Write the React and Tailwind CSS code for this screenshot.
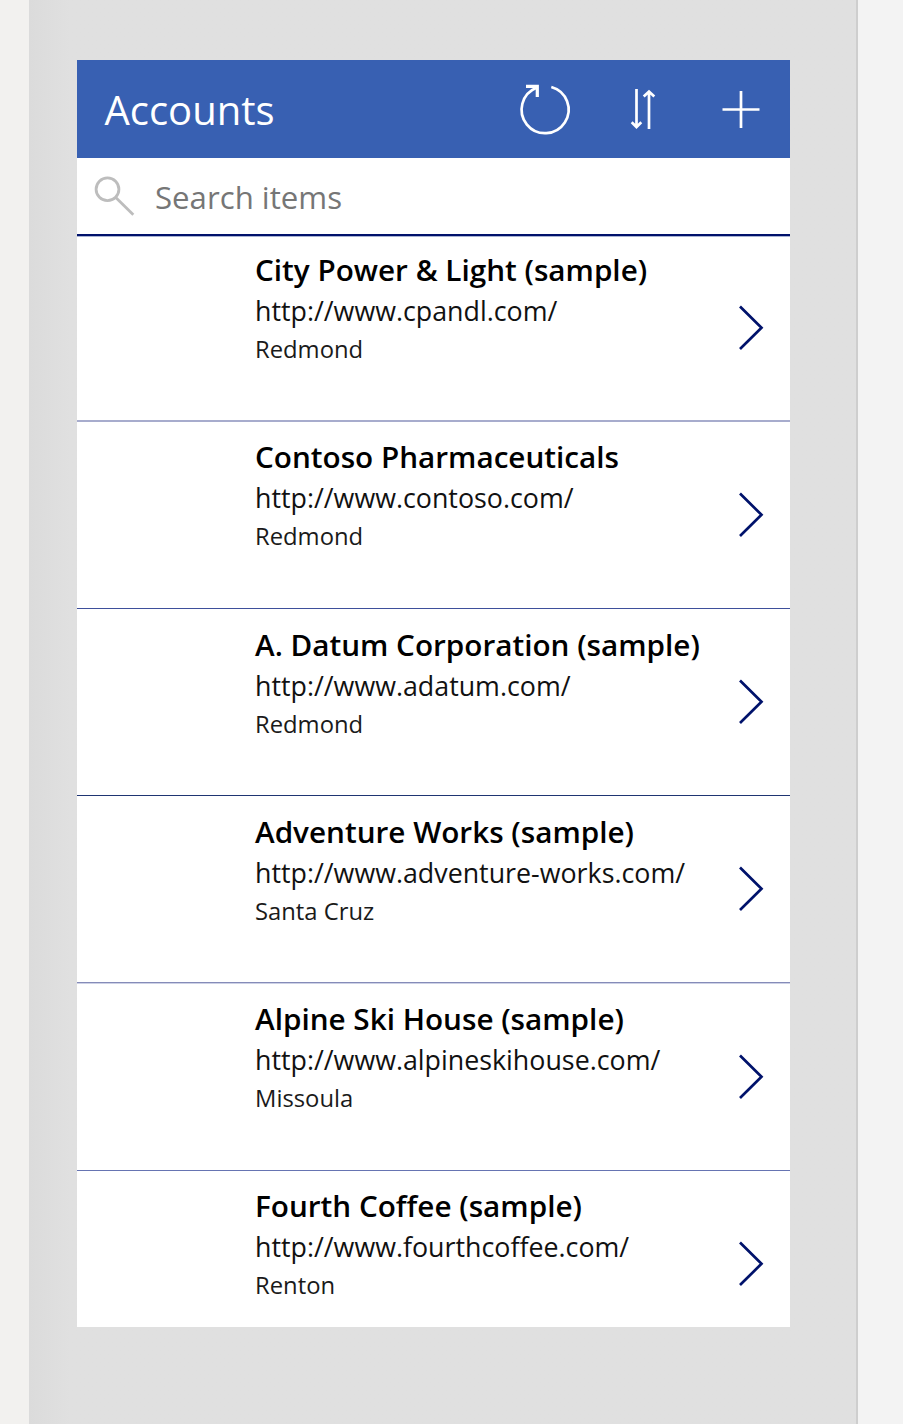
const accounts = [
  { name: "City Power & Light (sample)", url: "http://www.cpandl.com/", city: "Redmond", row: "h-[185px] pt-[13px] border-b-2 border-[#a7accd]", chev: "mt-[55px]" },
  { name: "Contoso Pharmaceuticals", url: "http://www.contoso.com/", city: "Redmond", row: "h-[187px] pt-[15px] border-b border-[#3e4f9b]", chev: "mt-[55px]" },
  { name: "A. Datum Corporation (sample)", url: "http://www.adatum.com/", city: "Redmond", row: "h-[187px] pt-[16px] border-b border-[#1f3572]", chev: "mt-[54px]" },
  { name: "Adventure Works (sample)", url: "http://www.adventure-works.com/", city: "Santa Cruz", row: "h-[187px] pt-[16px] border-b border-[#858bb8] shadow-[0_1px_0_#cdd1e6]", chev: "mt-[54px]" },
  { name: "Alpine Ski House (sample)", url: "http://www.alpineskihouse.com/", city: "Missoula", row: "h-[188px] pt-[16px] border-b border-[#6674b2]", chev: "mt-[55px]" },
  { name: "Fourth Coffee (sample)", url: "http://www.fourthcoffee.com/", city: "Renton", row: "h-[156px] pt-[15px]", chev: "mt-[55px]" },
];

function Header() {
  return (
    <header className="flex h-[98px] items-center bg-[#3860b2] text-white">
      <h1 className="w-[436px] pl-[27.5px] pt-[2px] text-[40px] leading-[54px]">Accounts</h1>
      <svg className="h-[98px] w-[277px]" viewBox="513 60 277 98" fill="none" stroke="currentColor" strokeWidth="2.7">
        <path d="M551.3 87A23.5 23.5 0 1 1 536.5 87.8" />
        <path d="M526 86.4H537.3V97" strokeWidth="3.2" />
        <path d="M636.5 89V127M631.7 122.3L636.5 127L641.3 122.3M649 129V91.5M643.7 96.5L649 91.5L654.3 96.5" />
        <path d="M722.5 109.5H759.5M741 91V128" />
      </svg>
    </header>
  );
}

function SearchBar() {
  return (
    <div className="mb-px flex h-[78px] items-center border-b-2 border-[#00126b] shadow-[0_1px_0_#a9b3d3]">
      <svg className="h-[76px] w-[78px]" viewBox="77 158 78 76" fill="none" stroke="#bdbdbd" strokeWidth="2.8">
        <circle cx="107.5" cy="189.2" r="11.4" />
        <path d="M115.5 197.2L133.3 214.8" />
      </svg>
      <span className="pt-[2px] text-[31.2px] leading-[44px] text-[#767676]">Search items</span>
    </div>
  );
}

function AccountRow({ account }) {
  return (
    <li className={`flex pl-[178px] ${account.row}`}>
      <div className="w-[480px] whitespace-nowrap text-black">
        <h2 className="text-[29.7px] font-semibold leading-[40px]">{account.name}</h2>
        <p className="text-[26.8px] leading-[41px] text-[#111]">{account.url}</p>
        <p className="text-[23.8px] leading-[36px] text-[#1a1a1a]">{account.city}</p>
      </div>
      <svg className={`h-[46px] w-[30px] shrink-0 ${account.chev}`} viewBox="735 305 30 46" fill="none" stroke="#00126b" strokeWidth="2.7">
        <path d="M740 306.5L761.5 327.8L740 349" />
      </svg>
    </li>
  );
}

export default function App() {
  return (
    <div className="flex h-[1424px] w-[903px] bg-[#f2f1ef] font-['Open_Sans',sans-serif]">
      <div className="ml-[29px] flex w-[829px] border-r-2 border-[#cecece] bg-linear-to-r from-[#dbdbdb] to-[#e0e0e0] to-5% pl-[48px] pt-[60px]">
        <main className="h-[1267px] w-[713px] overflow-hidden bg-white">
          <Header />
          <SearchBar />
          <ul>
            {accounts.map((account) => (
              <AccountRow key={account.name} account={account} />
            ))}
          </ul>
        </main>
      </div>
      <div className="flex-1 bg-[#f3f3f3]" />
    </div>
  );
}
